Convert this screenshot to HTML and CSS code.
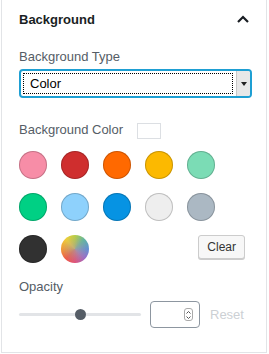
FILE: index.html
```html
<!DOCTYPE html>
<html lang="en">
<head>
  <meta charset="UTF-8">
  <title>Background panel</title>
  <link rel="stylesheet" href="styles.css">
</head>
<body>
  <!-- Sidebar panel -->
  <div class="panel">
    <div class="panel-header">
      <h2>Background</h2>
      <svg class="chevron" width="14" height="10" viewBox="0 0 14 10">
        <path d="M2 8 L7 3 L12 8" fill="none" stroke="#191e23" stroke-width="2.2"/>
      </svg>
    </div>

    <div class="panel-body">
      <label class="field-label">Background Type</label>
      <div class="select">
        <span class="select-value">Color</span>
        <span class="select-arrow"><i></i></span>
      </div>

      <div class="color-head">
        <span class="field-label">Background Color</span>
        <span class="current-color"></span>
      </div>

      <!-- Colour palette -->
      <div class="palette">
        <div class="swatch-row">
          <span class="swatch" style="background:#f78da7"></span>
          <span class="swatch" style="background:#cf2e2e"></span>
          <span class="swatch" style="background:#ff6900"></span>
          <span class="swatch" style="background:#fcb900"></span>
          <span class="swatch" style="background:#7bdcb5"></span>
        </div>
        <div class="swatch-row">
          <span class="swatch" style="background:#00d084"></span>
          <span class="swatch" style="background:#8ed1fc"></span>
          <span class="swatch" style="background:#0693e3"></span>
          <span class="swatch" style="background:#eeeeee"></span>
          <span class="swatch" style="background:#abb8c3"></span>
        </div>
        <div class="swatch-row">
          <span class="swatch" style="background:#313131"></span>
          <span class="swatch custom"></span>
          <button class="clear">Clear</button>
        </div>
      </div>

      <label class="field-label opacity-label">Opacity</label>
      <div class="range-row">
        <div class="track"><span class="thumb"></span></div>
        <div class="number">
          <span class="spin"><svg width="7" height="12" viewBox="0 0 7 12"><path d="M1.5 4.5 L3.5 2.5 L5.5 4.5 M1.5 7.5 L3.5 9.5 L5.5 7.5" fill="none" stroke="#555" stroke-width="1"/></svg></span>
        </div>
        <span class="reset">Reset</span>
      </div>
    </div>
  </div>
</body>
</html>
```

FILE: styles.css
```css
/* Reset */
* {
  margin: 0;
  padding: 0;
  box-sizing: border-box;
}
body {
  background: #fff;
  font-family: "Liberation Sans", Arial, sans-serif;
  font-size: 13px;
  color: #191e23;
}
/* Panel */
.panel {
  margin-left: 1px;
  width: 266px;
  height: 353px;
  border: 1px solid #e2e4e7;
  border-top: none;
}
.panel-header {
  height: 38px;
  display: flex;
  align-items: center;
  justify-content: space-between;
  padding: 0 16px 0 17px;
}
.panel-header h2 {
  font-size: 13px;
  font-weight: bold;
  color: #191e23;
}
.chevron {
  margin-top: -1px;
}
.panel-body {
  padding: 0 15px 0 17px;
}
.field-label {
  display: block;
  line-height: 18px;
  margin-top: 10px;
  color: #555d66;
  font-size: 13px;
}
/* Fake focused select */
.select {
  margin-top: 3px;
  height: 29px;
  width: 233px;
  border: 2px solid #1e9fd3;
  border-radius: 4px;
  background: #fff;
  display: flex;
  padding: 2px 0 2px 2px;
}
.select-value {
  flex: 1;
  border: 1px dotted #000;
  display: flex;
  align-items: center;
  padding-left: 6px;
  font-size: 13px;
  color: #000;
  margin-right: 3px;
}
.select-arrow {
  width: 14px;
  margin: -2px 0;
  background: #e8e8e8;
  border-left: 1px solid #c8c8c8;
  display: flex;
  align-items: center;
  justify-content: center;
  border-radius: 0 2px 2px 0;
}
.select-arrow i {
  width: 0;
  height: 0;
  border-left: 3px solid transparent;
  border-right: 3px solid transparent;
  border-top: 4px solid #222;
}
/* Background colour heading */
.color-head {
  margin-top: 24px;
  height: 16px;
  display: flex;
  align-items: center;
  gap: 14px;
}
.color-head .field-label {
  margin-top: 0;
}
.current-color {
  width: 24px;
  height: 16px;
  border: 1px solid #dcdfe3;
  margin-top: 2px;
}
/* Palette */
.palette {
  margin-top: 13px;
  width: 226px;
  display: flex;
  flex-direction: column;
  gap: 14px;
}
.swatch-row {
  display: flex;
  align-items: flex-start;
  gap: 14px;
}
.swatch {
  width: 28px;
  height: 28px;
  border-radius: 50%;
  box-shadow: inset 0 0 0 1px rgba(0, 0, 0, 0.2);
}
.swatch.custom {
  box-shadow: none;
  background:
    radial-gradient(circle, rgba(170, 160, 150, 0.75) 0%, rgba(170, 160, 150, 0) 70%),
    conic-gradient(#b8cf45, #5fb7a0 12%, #5f8fd6 25%, #9b6cc8 37%, #e0507a 50%, #ef5a45 62%, #f39a35 75%, #f2cf35 88%, #b8cf45);
}
.clear {
  margin-left: auto;
  height: 24px;
  padding: 0 8px;
  font-family: "Liberation Sans", Arial, sans-serif;
  font-size: 12px;
  color: #333;
  background: #f7f7f7;
  border: 1px solid #ccc;
  border-radius: 3px;
  box-shadow: 0 1px 0 #ccc;
}
/* Opacity */
.opacity-label {
  margin-top: 15px;
}
.range-row {
  margin-top: 5px;
  display: flex;
  align-items: center;
  height: 27px;
}
.track {
  width: 122px;
  height: 3px;
  background: #e2e4e7;
  border-radius: 2px;
  position: relative;
}
.thumb {
  position: absolute;
  left: 56px;
  top: -4px;
  width: 11px;
  height: 11px;
  border-radius: 50%;
  background: #555d66;
}
.number {
  margin-left: 9px;
  width: 50px;
  height: 27px;
  border: 1px solid #8d96a0;
  border-radius: 4px;
  display: flex;
  align-items: center;
  justify-content: flex-end;
  padding-right: 6px;
}
.spin {
  width: 9px;
  height: 13px;
  border: 1px solid #aaa;
  border-radius: 3px;
  display: flex;
  align-items: center;
  justify-content: center;
}
.reset {
  margin-left: 10px;
  color: #ccd0d4;
  font-size: 13px;
}
```
